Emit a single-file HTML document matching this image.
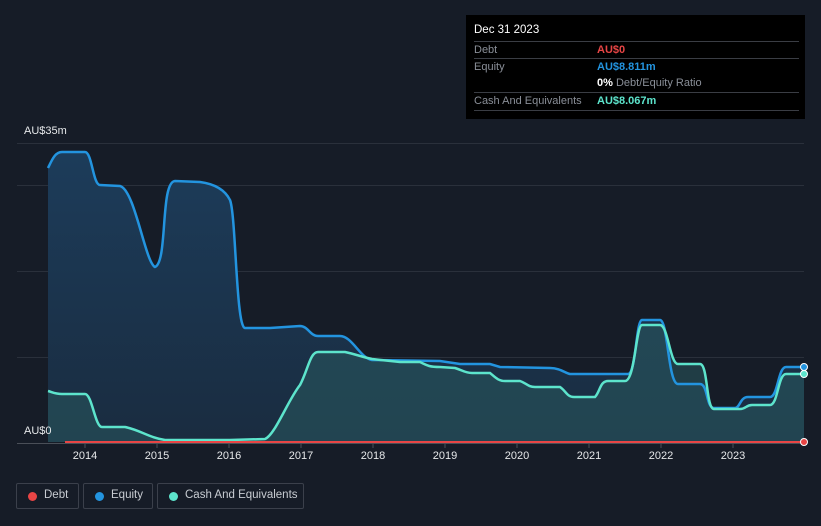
<!DOCTYPE html>
<html><head><style>
body{margin:0;width:821px;height:526px;background:#161c27;font-family:"Liberation Sans",sans-serif;overflow:hidden;position:relative}
.tt{position:absolute;left:466px;top:15px;width:339px;height:104px;background:#000;font-size:11px;color:#8a8f98}
.tt .h{position:absolute;left:8px;top:9px;color:#fff;font-size:11.5px}
.row{position:absolute;left:8px;width:325px;border-top:1px solid #3a3d44;height:17px}
.row span{position:absolute;top:2px}
.lg{position:absolute;top:483px;height:26px;border:1px solid #3b404b;border-radius:2px;color:#c8ccd2;font-size:11.5px;box-sizing:border-box}
.lg i{position:absolute;left:11px;top:8px;width:9px;height:9px;border-radius:50%}
.lg span{position:absolute;left:27px;top:5px;white-space:nowrap}
.ax{position:absolute;top:450px;color:#e6e8ea;font-size:11px;width:40px;text-align:center}
</style></head><body>
<svg width="821" height="526" style="position:absolute;left:0;top:0">
<defs><linearGradient id="g" x1="0" y1="0" x2="0" y2="1"><stop offset="0" stop-color="#1c3c5a"/><stop offset="1" stop-color="#1a2c40"/></linearGradient></defs>
<g stroke="#2a303b" stroke-width="1"><line x1="17" y1="143.5" x2="804" y2="143.5"/><line x1="17" y1="185.5" x2="804" y2="185.5"/><line x1="17" y1="271.5" x2="804" y2="271.5"/><line x1="17" y1="357.5" x2="804" y2="357.5"/></g>
<path fill="url(#g)" d="M48,168 C52,160 55,152 62,152 L85,152 C92,152 93,185 100,185 L120,186 C135,190 145,262 155,267 C168,262 160,182 175,181 L200,182 C215,184 225,190 230,200 C236,215 236,328 245,328 L270,328 L300,326 C308,326 310,336 318,336 L340,336 C352,336 360,358 372,360 L440,361 L460,364 L490,364 L500,367 L550,368 C560,368 565,373 570,374 L628,374 C636,374 636,320 642,320 L660,320 C668,320 668,384 678,384 L700,384 C708,384 706,408 714,408 L735,408 C740,408 740,397 748,397 L770,397 C778,397 778,367 786,367 L804,367 L804,442 L48,442Z"/>
<path fill="#2a5a5e" fill-opacity="0.55" d="M48,391 C52,392 55,394 62,394 L85,394 C92,394 95,427 102,427 L125,427 C140,430 150,438 165,440 L230,440 L265,439 C275,435 288,400 300,385 C308,370 310,352 318,352 L345,352 C355,354 362,357 372,359 L400,362 L420,362 C428,366 430,367 440,367 L455,368 C462,370 465,373 472,373 L490,373 C495,377 498,381 505,381 L520,381 C526,383 528,387 535,387 L560,387 C566,391 567,397 574,397 L595,397 C600,392 600,381 608,381 L625,381 C635,381 636,325 642,325 L660,325 C668,325 670,364 678,364 L700,364 C708,364 706,409 714,409 L740,409 C746,409 746,405 752,405 L770,405 C778,405 778,374 786,374 L804,374 L804,442 L48,442Z"/>
<path fill="none" stroke="#2394df" stroke-width="2.5" d="M48,168 C52,160 55,152 62,152 L85,152 C92,152 93,185 100,185 L120,186 C135,190 145,262 155,267 C168,262 160,182 175,181 L200,182 C215,184 225,190 230,200 C236,215 236,328 245,328 L270,328 L300,326 C308,326 310,336 318,336 L340,336 C352,336 360,358 372,360 L440,361 L460,364 L490,364 L500,367 L550,368 C560,368 565,373 570,374 L628,374 C636,374 636,320 642,320 L660,320 C668,320 668,384 678,384 L700,384 C708,384 706,408 714,408 L735,408 C740,408 740,397 748,397 L770,397 C778,397 778,367 786,367 L804,367"/>
<path fill="none" stroke="#5de4cc" stroke-width="2.5" d="M48,391 C52,392 55,394 62,394 L85,394 C92,394 95,427 102,427 L125,427 C140,430 150,438 165,440 L230,440 L265,439 C275,435 288,400 300,385 C308,370 310,352 318,352 L345,352 C355,354 362,357 372,359 L400,362 L420,362 C428,366 430,367 440,367 L455,368 C462,370 465,373 472,373 L490,373 C495,377 498,381 505,381 L520,381 C526,383 528,387 535,387 L560,387 C566,391 567,397 574,397 L595,397 C600,392 600,381 608,381 L625,381 C635,381 636,325 642,325 L660,325 C668,325 670,364 678,364 L700,364 C708,364 706,409 714,409 L740,409 C746,409 746,405 752,405 L770,405 C778,405 778,374 786,374 L804,374"/>
<line x1="17" y1="443.5" x2="804" y2="443.5" stroke="#4a4f58"/>
<line x1="65" y1="442" x2="804" y2="442" stroke="#e84545" stroke-width="2"/>
<g stroke="#4a4f58"><line x1="85" y1="444" x2="85" y2="448"/><line x1="157" y1="444" x2="157" y2="448"/><line x1="229" y1="444" x2="229" y2="448"/><line x1="301" y1="444" x2="301" y2="448"/><line x1="373" y1="444" x2="373" y2="448"/><line x1="445" y1="444" x2="445" y2="448"/><line x1="517" y1="444" x2="517" y2="448"/><line x1="589" y1="444" x2="589" y2="448"/><line x1="661" y1="444" x2="661" y2="448"/><line x1="733" y1="444" x2="733" y2="448"/></g>
<circle cx="804" cy="367" r="3.5" fill="#2394df" stroke="#fff" stroke-width="1"/>
<circle cx="804" cy="374" r="3.5" fill="#5de4cc" stroke="#fff" stroke-width="1"/>
<circle cx="804" cy="442" r="3.5" fill="#e84545" stroke="#fff" stroke-width="1"/>
</svg>
<div style="position:absolute;left:24px;top:125px;color:#e6e8ea;font-size:11px">AU$35m</div>
<div style="position:absolute;left:24px;top:425px;color:#e6e8ea;font-size:11px">AU$0</div>
<div class="ax" style="left:65px">2014</div><div class="ax" style="left:137px">2015</div><div class="ax" style="left:209px">2016</div><div class="ax" style="left:281px">2017</div><div class="ax" style="left:353px">2018</div><div class="ax" style="left:425px">2019</div><div class="ax" style="left:497px">2020</div><div class="ax" style="left:569px">2021</div><div class="ax" style="left:641px">2022</div><div class="ax" style="left:713px">2023</div>
<div class="tt"><div class="h">Dec 31 2023</div>
<div class="row" style="top:26px"><span>Debt</span><span style="left:123px;color:#e84545;font-weight:bold">AU$0</span></div>
<div class="row" style="top:43px"><span>Equity</span><span style="left:123px;color:#2394df;font-weight:bold">AU$8.811m</span></div>
<div class="row" style="top:60px;border-top:none"><span style="left:123px"><b style="color:#fff">0%</b> Debt/Equity Ratio</span></div>
<div class="row" style="top:77px;border-bottom:1px solid #3a3d44"><span>Cash And Equivalents</span><span style="left:123px;color:#5de4cc;font-weight:bold">AU$8.067m</span></div>
</div>
<div class="lg" style="left:16px;width:63px"><i style="background:#e84545"></i><span>Debt</span></div>
<div class="lg" style="left:83px;width:70px"><i style="background:#2394df"></i><span>Equity</span></div>
<div class="lg" style="left:157px;width:147px"><i style="background:#5de4cc"></i><span>Cash And Equivalents</span></div>
</body></html>
